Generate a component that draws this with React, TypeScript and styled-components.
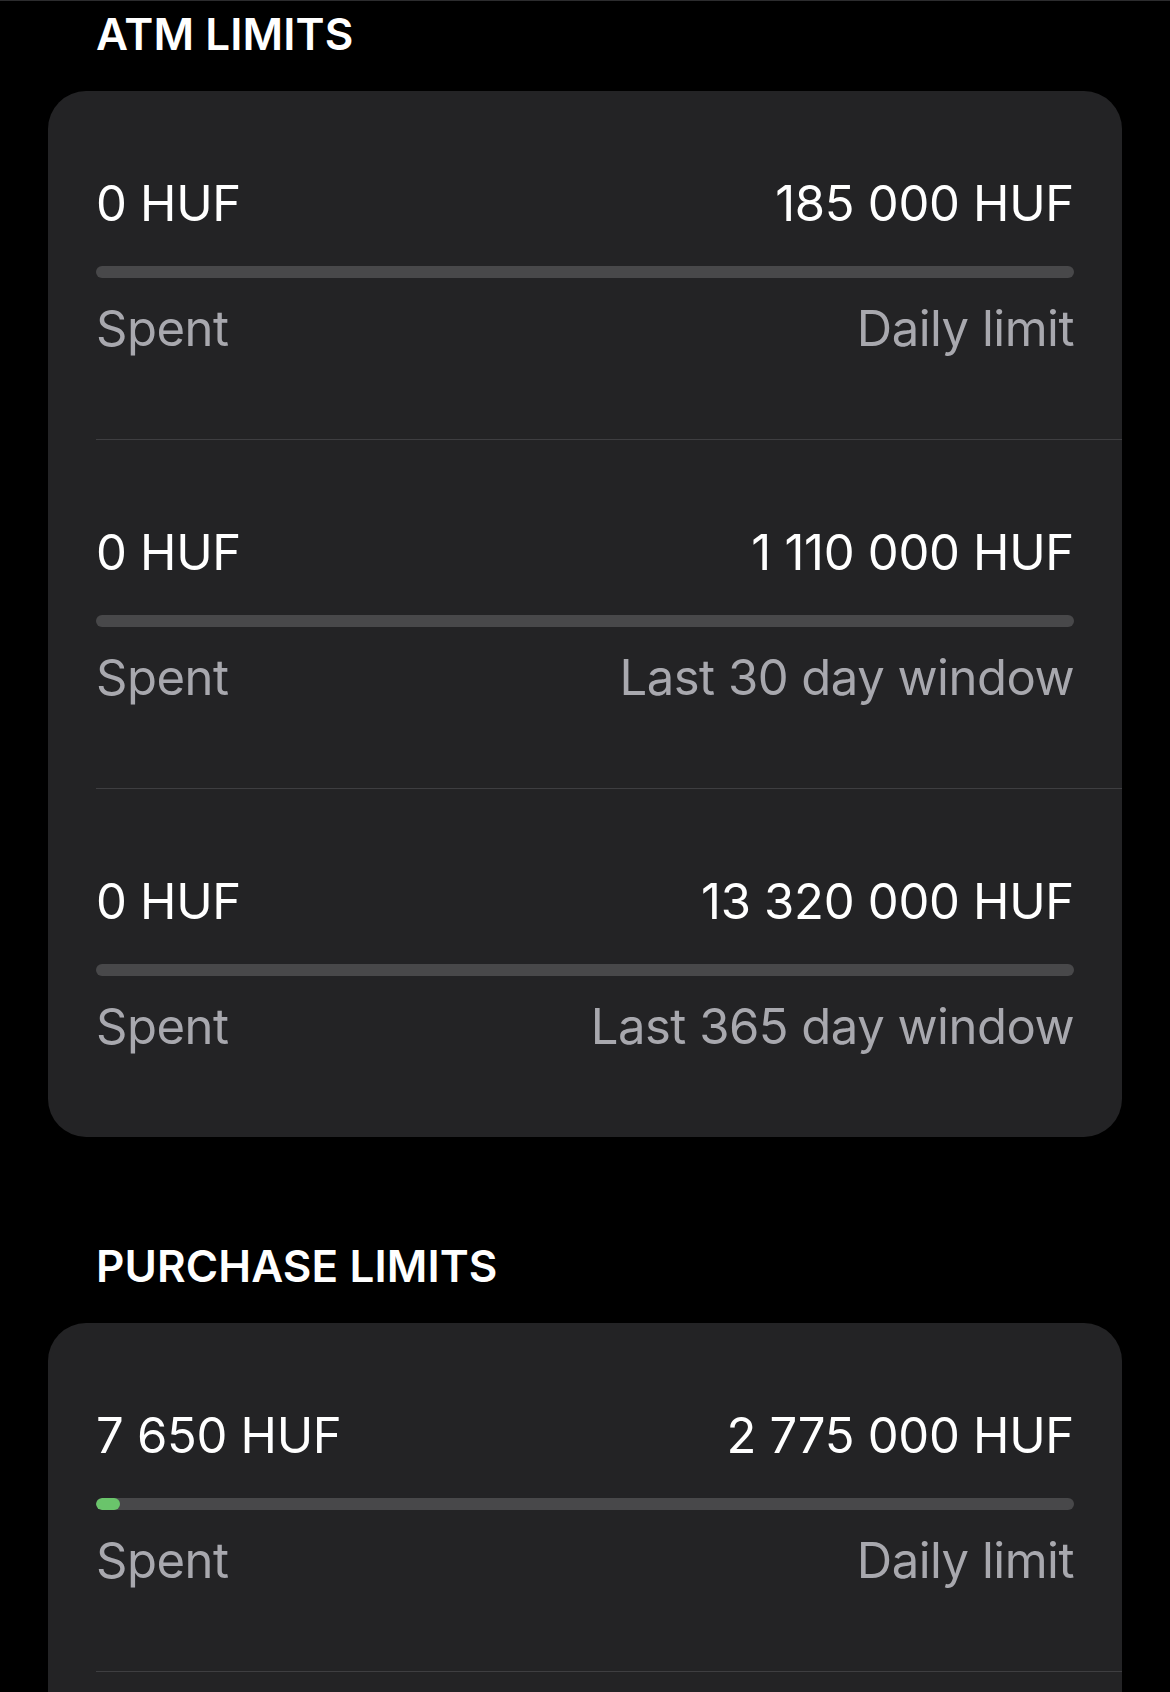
import styled, { createGlobalStyle } from "styled-components";

const GlobalStyle = createGlobalStyle`
  html, body {
    margin: 0;
    padding: 0;
    background: #000000;
  }
  body {
    font-family: Inter, "Noto Sans", "Liberation Sans", sans-serif;
    -webkit-font-smoothing: antialiased;
  }
`;

const Page = styled.div`
  border-top: 1px solid #2c2c2e;
  padding: 6px 48px 0;
  display: flex;
  flex-direction: column;
  gap: 102px;
`;

const Section = styled.section`
  display: flex;
  flex-direction: column;
`;

const SectionTitle = styled.h2`
  margin: 0 0 30px 48px;
  font-size: 44px;
  line-height: 54px;
  font-weight: 600;
  letter-spacing: 0.1px;
  color: #ffffff;
  text-transform: uppercase;
`;

const Card = styled.div`
  background: #232325;
  border-radius: 38px;
  overflow: hidden;
`;

const LimitRow = styled.div`
  display: flex;
  flex-direction: column;
  padding: 83px 48px 80px;
`;

const Line = styled.div`
  display: flex;
  justify-content: space-between;
  align-items: baseline;
`;

const Amount = styled.span`
  font-size: 49px;
  line-height: 60px;
  font-weight: 400;
  letter-spacing: -0.3px;
  color: #ffffff;
`;

const Caption = styled(Amount)`
  letter-spacing: -0.5px;
  color: #a8a8ae;
`;

const Track = styled.div`
  margin: 32px 0 21px;
  height: 12px;
  border-radius: 6px;
  background: #48484a;
  overflow: hidden;
`;

const Fill = styled.div`
  height: 100%;
  border-radius: 6px;
  background: #6ac46b;
`;

const Divider = styled.div`
  height: 1px;
  margin-left: 48px;
  background: #3e3e41;
`;

type Limit = {
  spent: number;
  limit: number;
  period: string;
};

const atmLimits: Limit[] = [
  { spent: 0, limit: 185000, period: "Daily limit" },
  { spent: 0, limit: 1110000, period: "Last 30 day window" },
  { spent: 0, limit: 13320000, period: "Last 365 day window" },
];

const purchaseLimits: Limit[] = [
  { spent: 7650, limit: 2775000, period: "Daily limit" },
  { spent: 7650, limit: 16650000, period: "Last 30 day window" },
  { spent: 7650, limit: 199800000, period: "Last 365 day window" },
];

// group thousands with a space, like the hu locale does
const formatHuf = (n: number) =>
  `${n.toString().replace(/\B(?=(\d{3})+(?!\d))/g, " ")} HUF`;

function LimitBar({ spent, limit }: { spent: number; limit: number }) {
  const ratio = limit > 0 ? spent / limit : 0;
  return (
    <Track>
      {ratio > 0 && <Fill style={{ width: `${Math.max(ratio * 100, 2.45)}%` }} />}
    </Track>
  );
}

function LimitCard({ title, limits }: { title: string; limits: Limit[] }) {
  return (
    <Section>
      <SectionTitle>{title}</SectionTitle>
      <Card>
        {limits.map((l, i) => (
          <div key={l.period}>
            {i > 0 && <Divider />}
            <LimitRow>
              <Line>
                <Amount>{formatHuf(l.spent)}</Amount>
                <Amount>{formatHuf(l.limit)}</Amount>
              </Line>
              <LimitBar spent={l.spent} limit={l.limit} />
              <Line>
                <Caption>Spent</Caption>
                <Caption>{l.period}</Caption>
              </Line>
            </LimitRow>
          </div>
        ))}
      </Card>
    </Section>
  );
}

export default function App() {
  return (
    <>
      <GlobalStyle />
      <Page>
        <LimitCard title="ATM limits" limits={atmLimits} />
        <LimitCard title="Purchase limits" limits={purchaseLimits} />
      </Page>
    </>
  );
}
